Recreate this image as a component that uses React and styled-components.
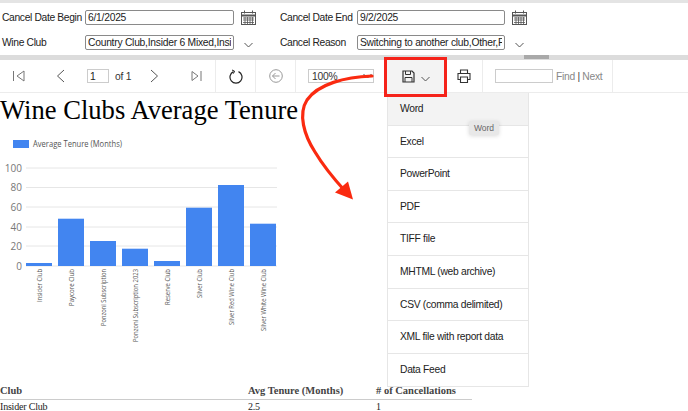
import React from "react";
import styled, { createGlobalStyle } from "styled-components";

const bars = [
  { name: "Insider Club", top: 263, len: 33 },
  { name: "Paycore Club", top: 218.7, len: 37 },
  { name: "Ponzoni Subscription", top: 241, len: 57 },
  { name: "Ponzoni Subscription 2023", top: 248.7, len: 73 },
  { name: "Reserve Club", top: 261, len: 36 },
  { name: "Silver Club", top: 207.7, len: 29 },
  { name: "Silver Red Wine Club", top: 185, len: 56 },
  { name: "Silver White Wine Club", top: 223.7, len: 62 },
];

const ticks = [
  { label: "100", y: 168 },
  { label: "80", y: 187.5 },
  { label: "60", y: 207 },
  { label: "40", y: 227 },
  { label: "20", y: 246 },
  { label: "0", y: 266 },
];

const formats = [
  "Word",
  "Excel",
  "PowerPoint",
  "PDF",
  "TIFF file",
  "MHTML (web archive)",
  "CSV (comma delimited)",
  "XML file with report data",
  "Data Feed",
];

const rows = [{ club: "Insider Club", tenure: "2.5", count: "1" }];

const CalendarIcon = () => (
  <svg width="15" height="15" viewBox="0 0 15 15" fill="none" stroke="#555" strokeWidth="1">
    <rect x="0.5" y="2.5" width="14" height="12" />
    <path d="M0.5 5.5h14" strokeWidth="2" />
    <path d="M3.5 0.5v3M11.5 0.5v3" />
    <path d="M2 8h11M2 10h11M2 12.5h11M4 7v7M6.5 7v7M9 7v7M11.5 7v7" strokeWidth="0.8" />
  </svg>
);

const Chevron = () => (
  <svg width="9" height="6" viewBox="0 0 9 6" fill="none" stroke="#555" strokeWidth="1">
    <path d="M0.5 1l4 4 4-4" />
  </svg>
);

const ToolIcon = ({ children, w = 14, h = 14 }) => (
  <svg width={w} height={h} viewBox={`0 0 ${w} ${h}`} fill="none" stroke="#777" strokeWidth="1">
    {children}
  </svg>
);

export default function App() {
  return (
    <Page>
      <Global />
      <Params>
        <Label>Cancel Date Begin</Label>
        <Field defaultValue="6/1/2025" readOnly />
        <IconSlot><CalendarIcon /></IconSlot>
        <Label>Cancel Date End</Label>
        <Field defaultValue="9/2/2025" readOnly />
        <IconSlot><CalendarIcon /></IconSlot>
        <Label>Wine Club</Label>
        <Field defaultValue="Country Club,Insider 6 Mixed,Insider 6 Red" readOnly />
        <IconSlot $chevron><Chevron /></IconSlot>
        <Label>Cancel Reason</Label>
        <Field defaultValue="Switching to another club,Other,Price" readOnly />
        <IconSlot $chevron><Chevron /></IconSlot>
      </Params>
      <Splitter>
        <Grip />
      </Splitter>
      <Toolbar>
        <ToolGroup $width={216}>
          <NavButton $left={13}>
            <ToolIcon w={12} h={12}>
              <path d="M0.5 1v10M11 1L4 6l7 5z" />
            </ToolIcon>
          </NavButton>
          <NavButton $left={31}>
            <ToolIcon w={9} h={14}>
              <path d="M8 1L1.5 7 8 13" stroke="#555" />
            </ToolIcon>
          </NavButton>
          <PageBox defaultValue="1" readOnly />
          <PageCount>of 1</PageCount>
          <NavButton $left={19}>
            <ToolIcon w={9} h={14}>
              <path d="M1 1l6.5 6L1 13" stroke="#555" />
            </ToolIcon>
          </NavButton>
          <NavButton $left={32}>
            <ToolIcon w={11} h={12}>
              <path d="M1 1.500l6 4.500-6 4.500zM10 1v10" />
            </ToolIcon>
          </NavButton>
        </ToolGroup>
        <ToolGroup $width={40} $center>
          <ToolIcon w={14} h={15}>
            <path d="M4.500 2.600a6 6 0 1 0 5 0" stroke="#222" strokeWidth="1.200" />
            <path d="M3 1l2.600 1.200L4.400 4.600" stroke="#222" strokeWidth="1" />
          </ToolIcon>
        </ToolGroup>
        <ToolGroup $width={40} $center>
          <ToolIcon w={14} h={14}>
            <circle cx="7" cy="7" r="6.300" stroke="#999" />
            <path d="M10.500 7h-7M6.500 4L3.500 7l3 3" stroke="#999" />
          </ToolIcon>
        </ToolGroup>
        <ZoomGroup>
          <ZoomBox>
            100%
            <Chevron />
          </ZoomBox>
        </ZoomGroup>
        <SaveButton>
          <ToolIcon w={13} h={13}>
            <path d="M1 1h9l2 2v9H1z" stroke="#333" strokeWidth="1.200" />
            <path d="M3.500 1v3.500h5V1M3 12V7.500h7V12" stroke="#333" />
          </ToolIcon>
          <Chevron />
        </SaveButton>
        <ToolGroup $width={38} $center>
          <ToolIcon w={14} h={14}>
            <path d="M3.500 4.500V1h7v3.500M3.500 10.500H1V4.500h12v6h-2.500" stroke="#333" strokeWidth="1.100" />
            <path d="M3.500 8h7v5.500h-7z" stroke="#333" strokeWidth="1.100" />
          </ToolIcon>
        </ToolGroup>
        <FindGroup>
          <FindBox readOnly />
          <FindText>Find <b>|</b> Next</FindText>
        </FindGroup>
      </Toolbar>
      <Report>
        <Title>Wine Clubs Average Tenure</Title>
        <Chart width="290" height="240" viewBox="0 118 290 240">
          <rect x="13" y="140" width="16" height="8" fill="#4285f0" />
          <ChartText x="33" y="146.500" fontSize="8.500" textLength="89" lengthAdjust="spacingAndGlyphs">
            Average Tenure (Months)
          </ChartText>
          {ticks.map((t) => (
            <g key={t.label}>
              <line x1="26" x2="277" y1={t.y} y2={t.y} stroke="#e6e6e6" />
              <ChartText x="22" y={t.y + 3.500} fontSize="10" textAnchor="end" fill="#777">
                {t.label}
              </ChartText>
            </g>
          ))}
          {bars.map((b, i) => (
            <g key={b.name}>
              <rect x={26 + i * 32} y={b.top} width="26" height={266 - b.top} fill="#4285f0" />
              <ChartText
                transform={`translate(${42 + i * 32} 269) rotate(-90)`}
                fontSize="7.500"
                textAnchor="end"
                textLength={b.len}
                lengthAdjust="spacingAndGlyphs"
              >
                {b.name}
              </ChartText>
            </g>
          ))}
        </Chart>
        <Table>
          <thead>
            <tr>
              <HeadCell $width={248}>Club</HeadCell>
              <HeadCell $width={128}>Avg Tenure (Months)</HeadCell>
              <HeadCell $width={96}># of Cancellations</HeadCell>
            </tr>
          </thead>
          <tbody>
            {rows.map((r) => (
              <tr key={r.club}>
                <BodyCell>{r.club}</BodyCell>
                <BodyCell>{r.tenure}</BodyCell>
                <BodyCell>{r.count}</BodyCell>
              </tr>
            ))}
          </tbody>
        </Table>
      </Report>
      <Menu>
        {formats.map((f, i) => (
          <MenuItem key={f} $active={i === 0}>{f}</MenuItem>
        ))}
      </Menu>
      <Tip>Word</Tip>
      <RedBox />
      <Arrow width="688" height="411" viewBox="0 0 688 411" fill="none">
        <path
          d="M372 76C345 77 318 84 307 100C298 114 304 135 315 152C324 167 335 180 345 191"
          stroke="#fa2a10"
          strokeWidth="3.200"
          strokeLinecap="round"
        />
        <path d="M335 192.500L348 181.500L353 199.500z" fill="#fa2a10" />
      </Arrow>
    </Page>
  );
}

const Global = createGlobalStyle`
  html, body {
    margin: 0;
    padding: 0;
    background: #fff;
  }
`;

const Page = styled.div`
  position: relative;
  width: 688px;
  height: 411px;
  overflow: hidden;
  border-top: 3px solid #e4e4e4;
  box-sizing: border-box;
  font-family: "Liberation Sans", Arial, sans-serif;
  color: #222;
`;

const Params = styled.div`
  display: grid;
  grid-template-columns: 85px 149px 44px 79px 148px 30px;
  grid-auto-rows: 25px;
  align-items: center;
  height: 52px;
  padding-top: 2px;
  box-sizing: border-box;
`;

const Label = styled.label`
  font-size: 10.300px;
  letter-spacing: -0.35px;
  padding-left: 2px;
  white-space: nowrap;
`;

const Field = styled.input`
  box-sizing: border-box;
  width: 100%;
  height: 15px;
  padding: 0 2px;
  border: 1px solid #8a8a8a;
  border-radius: 2px;
  font: 10.300px "Liberation Sans", Arial, sans-serif;
  letter-spacing: -0.25px;
  color: #222;
  outline: none;
`;

const IconSlot = styled.span`
  display: flex;
  align-items: center;
  padding-left: ${(p) => (p.$chevron ? "10px" : "7px")};
  padding-top: ${(p) => (p.$chevron ? "4px" : "0")};
`;

const Splitter = styled.div`
  display: flex;
  justify-content: flex-end;
  height: 5px;
  background: #dcdcdc;
  padding-right: 139px;
`;

const Grip = styled.div`
  width: 25px;
  height: 4px;
  background: #a9a9a9;
`;

const Toolbar = styled.div`
  display: flex;
  align-items: stretch;
  height: 33px;
  box-sizing: border-box;
  border-bottom: 1px solid #ececec;
`;

const ToolGroup = styled.div`
  display: flex;
  align-items: center;
  justify-content: ${(p) => (p.$center ? "center" : "flex-start")};
  width: ${(p) => p.$width}px;
  flex: none;
  box-sizing: border-box;
  border-right: 1px solid #ececec;
`;

const NavButton = styled.span`
  display: flex;
  margin-left: ${(p) => p.$left}px;
`;

const PageBox = styled.input`
  box-sizing: border-box;
  width: 22px;
  height: 14px;
  margin-left: 22px;
  padding: 0 2px;
  border: 1px solid #ccc;
  font: 10.300px "Liberation Sans", Arial, sans-serif;
  color: #222;
  outline: none;
`;

const PageCount = styled.span`
  margin-left: 6px;
  font-size: 10.300px;
  letter-spacing: -0.25px;
  color: #333;
`;

const ZoomGroup = styled.div`
  flex: none;
  width: 89px;
  display: flex;
  align-items: center;
  padding-left: 12px;
  box-sizing: border-box;
`;

const ZoomBox = styled.div`
  display: flex;
  align-items: center;
  justify-content: space-between;
  box-sizing: border-box;
  width: 66px;
  height: 14px;
  padding: 0 1px 0 3px;
  border: 1px solid #ccc;
  font-size: 10.300px;
  letter-spacing: -0.25px;
  color: #333;
`;

const SaveButton = styled.div`
  flex: none;
  width: 60px;
  display: flex;
  align-items: center;
  gap: 6px;
  padding-left: 17px;
  box-sizing: border-box;
  background: #f3f3f3;
  svg:last-child {
    margin-top: 5px;
  }
`;

const FindGroup = styled.div`
  flex: none;
  width: 130px;
  display: flex;
  align-items: center;
  gap: 3px;
  padding-left: 12px;
  box-sizing: border-box;
  border-right: 1px solid #ececec;
`;

const FindBox = styled.input`
  box-sizing: border-box;
  width: 58px;
  height: 14px;
  border: 1px solid #ccc;
  outline: none;
`;

const FindText = styled.span`
  font-size: 10.300px;
  letter-spacing: -0.3px;
  color: #888;
  b {
    font-weight: 400;
    color: #444;
  }
`;

const Report = styled.div`
  font-family: "Liberation Serif", "Times New Roman", serif;
  color: #111;
`;

const Title = styled.h1`
  margin: 0;
  height: 35px;
  font-size: 26.600px;
  line-height: 35px;
  font-weight: 400;
  white-space: nowrap;
  color: #000;
`;

const Chart = styled.svg`
  display: block;
  margin-top: -10px;
  height: 240px;
`;

const ChartText = styled.text`
  font-family: "Open Sans", "Liberation Sans", sans-serif;
  fill: ${(p) => p.fill || "#555"};
`;

const Table = styled.table`
  width: 472px;
  margin-top: 23px;
  border-collapse: collapse;
  table-layout: fixed;
  font-size: 10.500px;
`;

const HeadCell = styled.th`
  width: ${(p) => p.$width}px;
  height: 18px;
  padding: 0;
  text-align: left;
  font-weight: 700;
  color: #444;
  border-bottom: 1px solid #ccc;
`;

const BodyCell = styled.td`
  height: 14px;
  padding: 0;
  line-height: 14px;
  font-size: 10px;
  letter-spacing: -0.2px;
  color: #222;
`;

const Menu = styled.ul`
  position: absolute;
  left: 387px;
  top: 90px;
  width: 142px;
  margin: 0;
  padding: 0;
  list-style: none;
  background: #fff;
  border: 1px solid #e6e6e6;
  border-top: none;
  box-sizing: border-box;
`;

const MenuItem = styled.li`
  box-sizing: border-box;
  height: 32.600px;
  padding-left: 12px;
  font-size: 10.300px;
  letter-spacing: -0.3px;
  line-height: 31px;
  color: #222;
  background: ${(p) => (p.$active ? "#f3f3f3" : "#fff")};
  border-bottom: 1px solid #e6e6e6;
  &:last-child {
    border-bottom: none;
  }
`;

const Tip = styled.div`
  position: absolute;
  left: 469px;
  top: 118px;
  width: 30px;
  height: 14px;
  text-align: center;
  font-size: 8.500px;
  line-height: 14px;
  color: #666;
  background: #e8e8e8;
  border-radius: 2px;
  box-shadow: 0 1px 4px rgba(0, 0, 0, 0.15);
`;

const RedBox = styled.div`
  position: absolute;
  left: 384px;
  top: 54px;
  width: 63px;
  height: 40px;
  box-sizing: border-box;
  border: 3px solid #f5231a;
`;

const Arrow = styled.svg`
  position: absolute;
  left: 0;
  top: -3px;
  pointer-events: none;
`;
